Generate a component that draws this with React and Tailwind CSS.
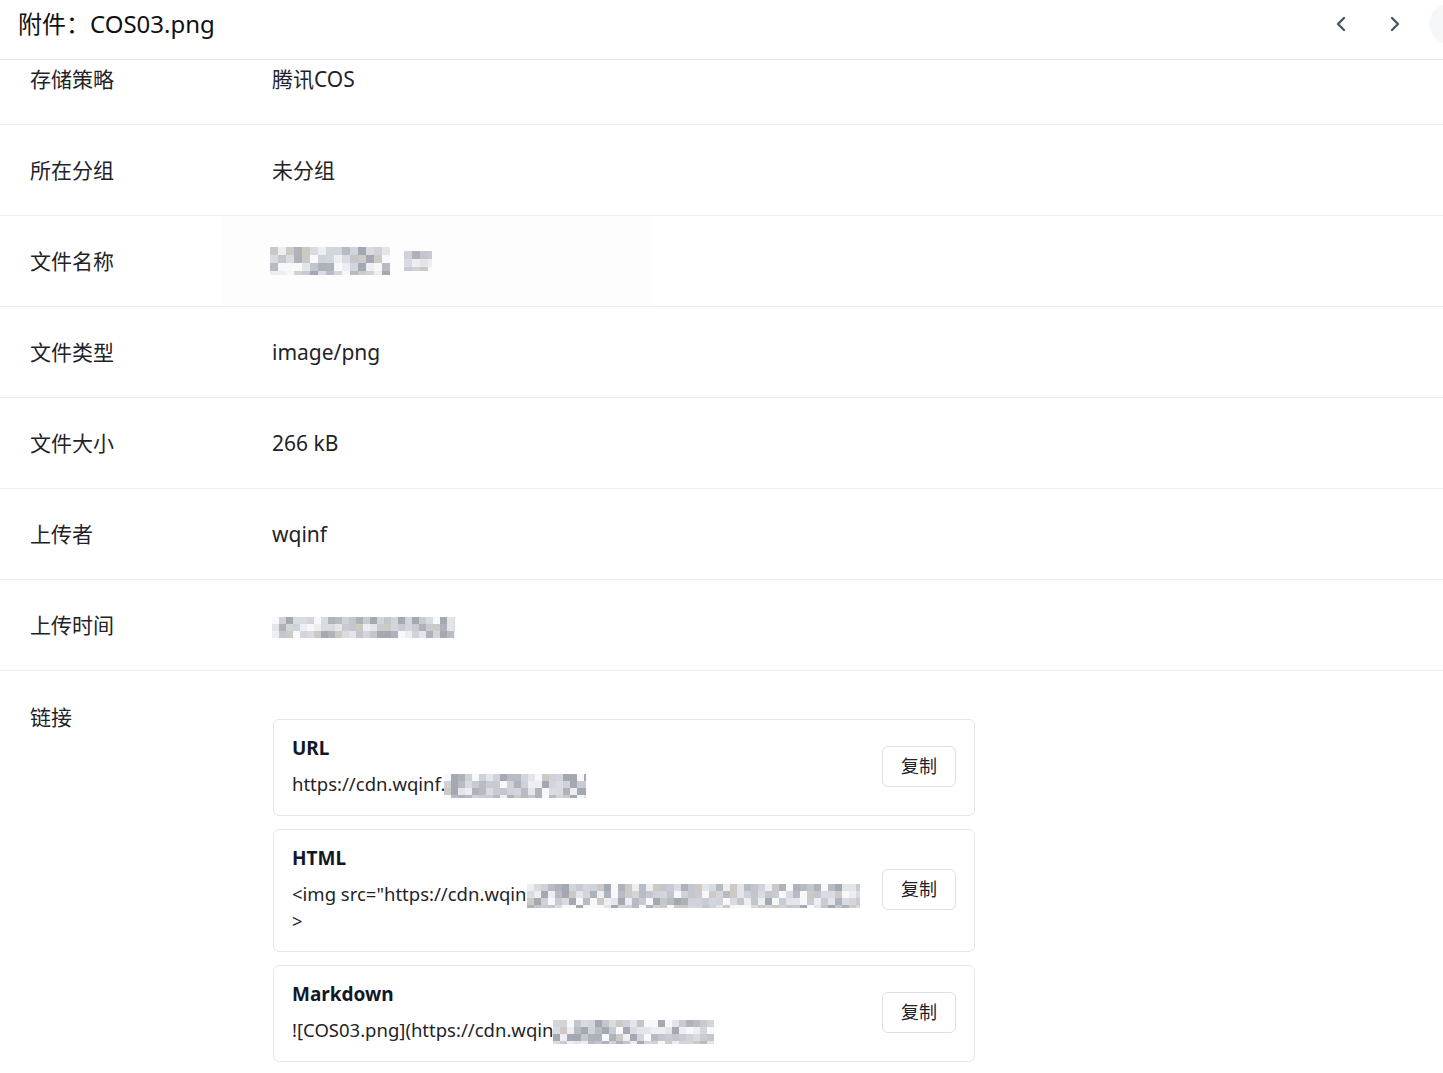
import React from "react";

function Mosaic({ w, h, cell = 7, seed = 1, className = "" }) {
  const cols = Math.ceil(w / cell);
  const rows = Math.ceil(h / cell);
  let s = seed * 9301 + 49297;
  const rnd = () => {
    s = (s * 9301 + 49297) % 233280;
    return s / 233280;
  };
  const palette = ["#c3c6cc", "#cfd2d8", "#b7bbc3", "#d9dbe0", "#aeb2bb", "#e3e5e9", "#c8cbd1", "#eceef1", "#a3a8b1", "#d2d5db", "#cdcac6"];
  const rects = [];
  for (let r = 0; r < rows; r++) {
    for (let c = 0; c < cols; c++) {
      const v = rnd();
      const color = v > 0.88 ? "#f7f8fa" : palette[Math.floor(rnd() * palette.length)];
      rects.push(<rect key={r + "-" + c} x={c * cell} y={r * cell} width={cell} height={cell} fill={color} />);
    }
  }
  return (
    <svg width={w} height={h} viewBox={`0 0 ${w} ${h}`} className={"inline-block align-middle " + className}>
      {rects}
    </svg>
  );
}

function Row({ label, children, first }) {
  return (
    <div className={"flex items-center h-[91px] border-b border-[#efefef] " + (first ? "-mt-[26px]" : "")}>
      <div className="w-[272px] shrink-0 pl-[30px] text-[21px] leading-[32px] text-[#1f2329]">{label}</div>
      <div className="flex-1 text-[21px] leading-[32px] text-[#1f2329]">{children}</div>
    </div>
  );
}

function CopyBtn() {
  return (
    <button className="shrink-0 w-[74px] h-[41px] rounded-[6px] border border-[#dcdfe4] bg-white text-[18px] text-[#1f2329]">
      复制
    </button>
  );
}

function LinkCard({ title, children }) {
  return (
    <div className="flex items-center gap-[22px] w-[702px] rounded-[6px] border border-[#e3e5e8] pl-[18px] pr-[18px] pt-[15px] pb-[17px]">
      <div className="flex-1 min-w-0">
        <div className="text-[19px] leading-[26px] font-bold text-[#111827]">{title}</div>
        <div className="mt-[10px] text-[18.5px] leading-[26px] text-[#1f2329]">{children}</div>
      </div>
      <CopyBtn />
    </div>
  );
}

export default function App() {
  return (
    <div
      className="w-[1443px] h-[1073px] overflow-hidden bg-white"
      style={{ fontFamily: '"Noto Sans", "Noto Sans CJK SC", sans-serif' }}
    >
      <div className="flex items-center h-[60px] border-b border-[#e6e6e6] pl-[18px]">
        <div className="flex-1 text-[24px] leading-[32px] text-[#111] -mt-[12px]">附件：COS03.png</div>
        <div className="flex items-center -mt-[12px] -mr-[26px]">
          <div className="w-[20px] flex justify-center">
            <svg width="14" height="18" viewBox="0 0 14 18" fill="none">
              <path d="M10 3 L4 9 L10 15" stroke="#4b5563" strokeWidth="2.4" strokeLinecap="round" strokeLinejoin="round" />
            </svg>
          </div>
          <div className="w-[20px] ml-[34px] flex justify-center">
            <svg width="14" height="18" viewBox="0 0 14 18" fill="none">
              <path d="M4 3 L10 9 L4 15" stroke="#4b5563" strokeWidth="2.4" strokeLinecap="round" strokeLinejoin="round" />
            </svg>
          </div>
          <div className="ml-[24px] w-[40px] h-[40px] rounded-full bg-[#f6f7f9] flex items-center justify-center shrink-0">
            <svg width="14" height="14" viewBox="0 0 14 14" fill="none">
              <path d="M2 2 L12 12 M12 2 L2 12" stroke="#4b5563" strokeWidth="2" strokeLinecap="round" />
            </svg>
          </div>
        </div>
      </div>

      <div className="overflow-hidden">
        <Row label="存储策略" first>腾讯COS</Row>
        <Row label="所在分组">未分组</Row>
        <div className="flex items-center h-[91px] border-b border-[#efefef]">
          <div className="w-[222px] shrink-0 pl-[30px] text-[21px] leading-[32px] text-[#1f2329]">文件名称</div>
          <div className="w-[430px] h-[90px] bg-[#fdfdfd] flex items-center pl-[48px] gap-[14px]">
            <Mosaic w={120} h={28} cell={8} seed={3} />
            <Mosaic w={28} h={20} cell={8} seed={7} />
          </div>
        </div>
        <Row label="文件类型">image/png</Row>
        <Row label="文件大小">266 kB</Row>
        <Row label="上传者">wqinf</Row>
        <Row label="上传时间">
          <Mosaic w={183} h={21} cell={7} seed={11} />
        </Row>
        <div className="flex items-start pt-[30px]">
          <div className="w-[273px] shrink-0 pl-[30px] text-[21px] leading-[32px] text-[#1f2329]">链接</div>
          <div className="flex-1 mt-[18px] flex flex-col gap-[13px]">
            <LinkCard title="URL">
              https://cdn.wqinf.<Mosaic w={142} h={24} cell={7} seed={5} className="-ml-[1px]" />
            </LinkCard>
            <LinkCard title="HTML">
              <span>&lt;img src="https://cdn.wqin</span>
              <Mosaic w={333} h={24} cell={7} seed={9} />
              <br />
              &gt;
            </LinkCard>
            <LinkCard title="Markdown">
              ![COS03.png](https://cdn.wqin<Mosaic w={161} h={24} cell={7} seed={13} />
            </LinkCard>
          </div>
        </div>
      </div>
    </div>
  );
}
